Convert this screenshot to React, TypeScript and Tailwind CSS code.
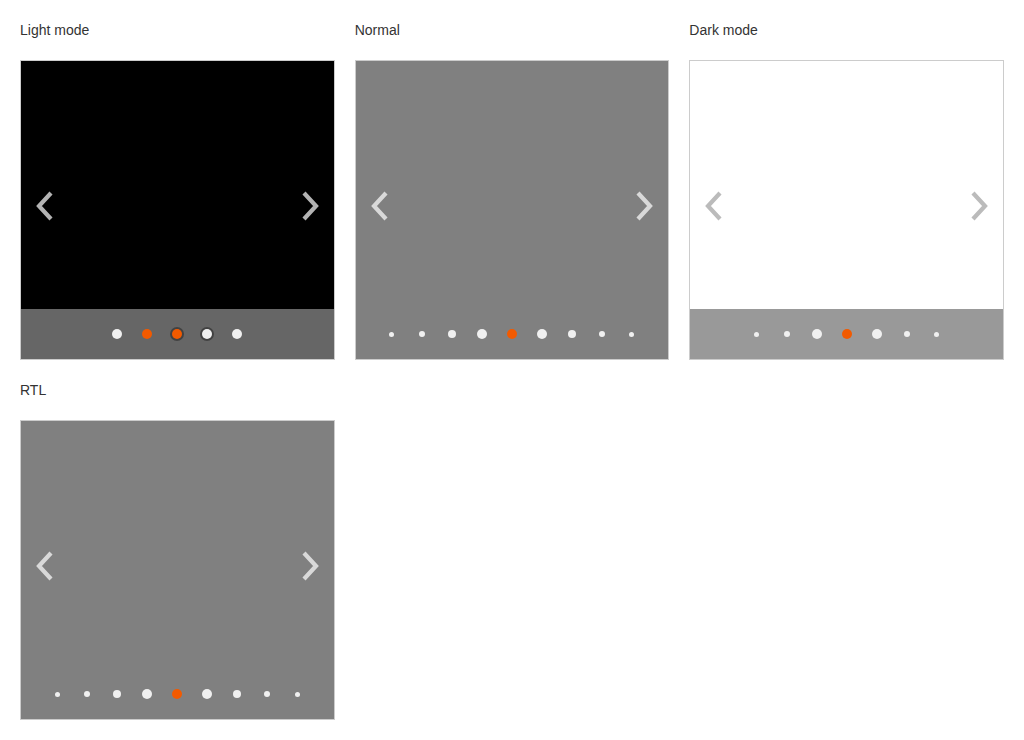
type Dot = { size: number; active?: boolean; ring?: boolean };

const big = (n: number, active = false): Dot => ({ size: n, active });

const lightDots: Dot[] = [
  { size: 10 },
  { size: 10, active: true },
  { size: 10, active: true, ring: true },
  { size: 10, ring: true },
  { size: 10 },
];

const normalDots: Dot[] = [big(5), big(6), big(8), big(10), big(10, true), big(10), big(8), big(6), big(5)];
const darkDots: Dot[] = [big(5), big(6), big(10), big(10, true), big(10), big(6), big(5)];

function Chevron({ dir, color }: { dir: "left" | "right"; color: string }) {
  const points = dir === "left" ? "15,2 3,15 15,28" : "3,2 15,15 3,28";
  return (
    <svg width="18" height="30" viewBox="0 0 18 30" fill="none">
      <polyline points={points} stroke={color} strokeWidth="4.2" strokeLinejoin="miter" />
    </svg>
  );
}

function Dots({ dots }: { dots: Dot[] }) {
  return (
    <div className="flex items-center justify-center">
      {dots.map((d, i) => (
        <div key={i} className="w-[30px] h-[14px] flex items-center justify-center">
          <span
            className={`block rounded-full ${d.active ? "bg-[#f25a00]" : "bg-[#f0f0f0]"} ${
              d.ring ? "shadow-[0_0_0_2px_rgba(0,0,0,0.35)]" : ""
            }`}
            style={{ width: d.size, height: d.size }}
          />
        </div>
      ))}
    </div>
  );
}

function Carousel({
  bg,
  bar,
  arrow,
  dots,
}: {
  bg: string;
  bar: string;
  arrow: string;
  dots: Dot[];
}) {
  return (
    <div className={`relative h-[300px] border border-[#cccccc] flex flex-col ${bg}`}>
      <div className="flex-1" />
      <div className={`h-[50px] flex items-center justify-center ${bar}`}>
        <Dots dots={dots} />
      </div>
      <div className="absolute left-[15px] top-[130px]">
        <Chevron dir="left" color={arrow} />
      </div>
      <div className="absolute right-[15px] top-[130px]">
        <Chevron dir="right" color={arrow} />
      </div>
    </div>
  );
}

function Demo({ title, children }: { title: string; children: React.ReactNode }) {
  return (
    <div>
      <div className="h-5 leading-5 text-sm text-[#333333] mb-5">{title}</div>
      {children}
    </div>
  );
}

export default function App() {
  return (
    <div className="min-h-screen bg-white p-5" style={{ fontFamily: '"Liberation Sans", Arial, sans-serif' }}>
      <div className="grid grid-cols-3 gap-5">
        <Demo title="Light mode">
          <Carousel bg="bg-black" bar="bg-[#666666]" arrow="#b3b3b3" dots={lightDots} />
        </Demo>
        <Demo title="Normal">
          <Carousel bg="bg-[#808080]" bar="bg-transparent" arrow="#d9d9d9" dots={normalDots} />
        </Demo>
        <Demo title="Dark mode">
          <Carousel bg="bg-white" bar="bg-[#999999]" arrow="#bbbbbb" dots={darkDots} />
        </Demo>
        <Demo title="RTL">
          <Carousel bg="bg-[#808080]" bar="bg-transparent" arrow="#d9d9d9" dots={normalDots} />
        </Demo>
      </div>
    </div>
  );
}
